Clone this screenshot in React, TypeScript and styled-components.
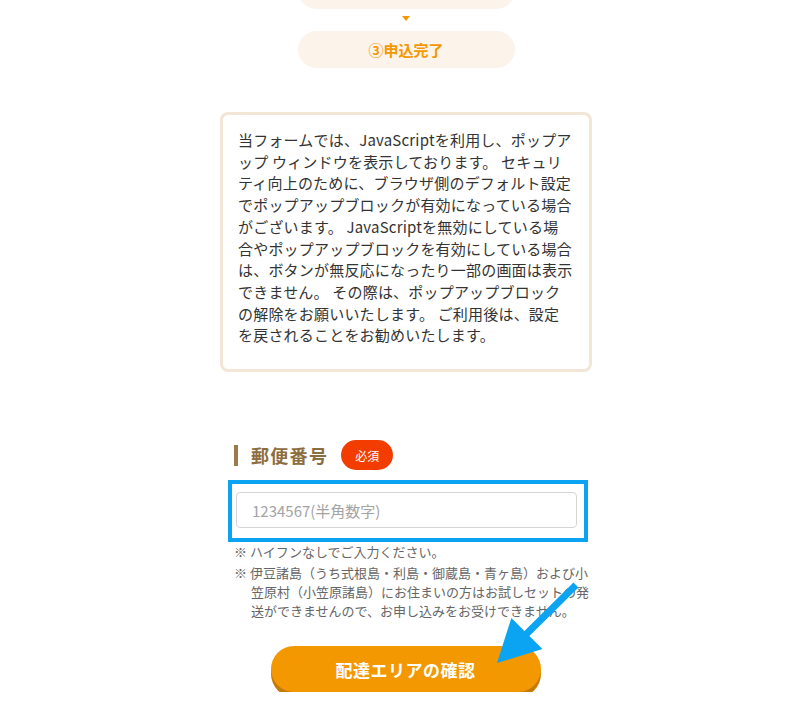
import styled, { createGlobalStyle } from "styled-components";

// #region styled
const GlobalStyle = createGlobalStyle`
  body {
    margin: 0;
    background: #fff;
    overflow: hidden;
    font-family: "Noto Sans CJK JP", "Noto Sans", sans-serif;
  }
`;

const Column = styled.div`
  width: 372px;
  margin: 0 auto;

  display: flex;
  flex-direction: column;
  align-items: center;
`;

const StepPill = styled.div<{ $clipped?: boolean }>`
  width: 217px;
  height: 37px;
  margin-top: ${(p) => (p.$clipped ? "-28px" : "0")};

  display: flex;
  align-items: center;
  justify-content: center;

  background-color: #fcf3ea;
  border-radius: 19px;

  color: #f39800;
  font-size: 15px;
  font-weight: 700;
`;

const StepArrow = styled.div`
  width: 0;
  height: 0;
  margin: 7px 0 10px;

  border-left: 4.5px solid transparent;
  border-right: 4.5px solid transparent;
  border-top: 5px solid #f39800;
`;

const Notice = styled.div`
  align-self: stretch;
  margin-top: 44px;
  padding: 14px 12px 23px 15px;

  border: 3px solid #f2e6d6;
  border-radius: 8px;

  color: #333;
  font-size: 15px;
  line-height: 21.7px;
  letter-spacing: 0.2px;
  white-space: nowrap;
`;

const FormSection = styled.div`
  align-self: stretch;
  margin-top: 68px;
  padding: 0 15px 0 14px;

  display: flex;
  flex-direction: column;
`;

const LabelRow = styled.div`
  height: 30px;

  display: flex;
  align-items: center;
  gap: 13px;
`;

const Label = styled.span`
  padding-left: 13px;

  border-left: 4px solid #9b7a4b;
  line-height: 21px;

  color: #8c6d3f;
  font-size: 18px;
  font-weight: 700;
  letter-spacing: 1.3px;
`;

const RequiredBadge = styled.span`
  width: 52px;
  height: 30px;

  display: flex;
  align-items: center;
  justify-content: center;

  background-color: #f23c00;
  border-radius: 15px;

  color: #fff;
  font-size: 12px;
`;

const Highlight = styled.div`
  margin: 10px -11px 0 -6px;
  padding: 8px 7px 10px 4px;

  border: 4px solid #0aa4f3;
`;

const ZipInput = styled.input`
  box-sizing: border-box;
  width: 100%;
  height: 36px;
  padding: 0 15px;

  border: 1px solid #d6d6d6;
  border-radius: 4px;
  outline: none;

  font-family: inherit;
  font-size: 15px;
  color: #333;

  &::placeholder {
    color: #a3a3a3;
  }
`;

const Note = styled.p<{ $gap?: number }>`
  margin: ${(p) => p.$gap ?? 0}px 0 0;
  padding-left: 17px;
  text-indent: -17px;

  color: #666;
  font-size: 13px;
  line-height: 19px;
  white-space: nowrap;
`;

const ButtonRow = styled.div`
  position: relative;
  align-self: stretch;
  margin-top: 26px;

  display: flex;
  justify-content: center;
`;

const CheckButton = styled.button`
  width: 270px;
  height: 46px;

  border: none;
  border-radius: 23px;
  background-color: #f39800;
  box-shadow: 0 5px 0 #c47a05;

  color: #fff;
  font-family: inherit;
  font-size: 17px;
  font-weight: 700;
  letter-spacing: 0.5px;
`;

// blue pointer laid over the notes, aimed at the button
const Pointer = styled.svg`
  position: absolute;
  left: 258px;
  top: -70px;
  width: 108px;
  height: 92px;
`;
// #endregion styled

const noticeLines = [
  "当フォームでは、JavaScriptを利用し、ポップア",
  "ップ ウィンドウを表示しております。 セキュリ",
  "ティ向上のために、ブラウザ側のデフォルト設定",
  "でポップアップブロックが有効になっている場合",
  "がございます。 JavaScriptを無効にしている場",
  "合やポップアップブロックを有効にしている場合",
  "は、ボタンが無反応になったり一部の画面は表示",
  "できません。 その際は、ポップアップブロック",
  "の解除をお願いいたします。 ご利用後は、設定",
  "を戻されることをお勧めいたします。",
];

export default function App() {
  return (
    <>
      <GlobalStyle />
      <Column>
        <StepPill $clipped />
        <StepArrow />
        <StepPill>③申込完了</StepPill>

        <Notice>
          {noticeLines.map((line, i) => (
            <div key={i}>{line}</div>
          ))}
        </Notice>

        <FormSection>
          <LabelRow>
            <Label>郵便番号</Label>
            <RequiredBadge>必須</RequiredBadge>
          </LabelRow>
          <Highlight>
            <ZipInput type="text" placeholder="1234567(半角数字)" />
          </Highlight>
          <Note>※ ハイフンなしでご入力ください。</Note>
          <Note $gap={2}>
            ※ 伊豆諸島（うち式根島・利島・御蔵島・青ヶ島）および小
            <br />
            笠原村（小笠原諸島）にお住まいの方はお試しセットの発
            <br />
            送ができませんので、お申し込みをお受けできません。
          </Note>

          <ButtonRow>
            <CheckButton type="button">配達エリアの確認</CheckButton>
            <Pointer viewBox="0 0 108 92">
              <polygon
                points="5,87 19.4,41.9 32.4,55 81.5,6.5 86.5,11.5 37.4,60 50.4,73.1"
                fill="#0aa4f3"
              />
            </Pointer>
          </ButtonRow>
        </FormSection>
      </Column>
    </>
  );
}
